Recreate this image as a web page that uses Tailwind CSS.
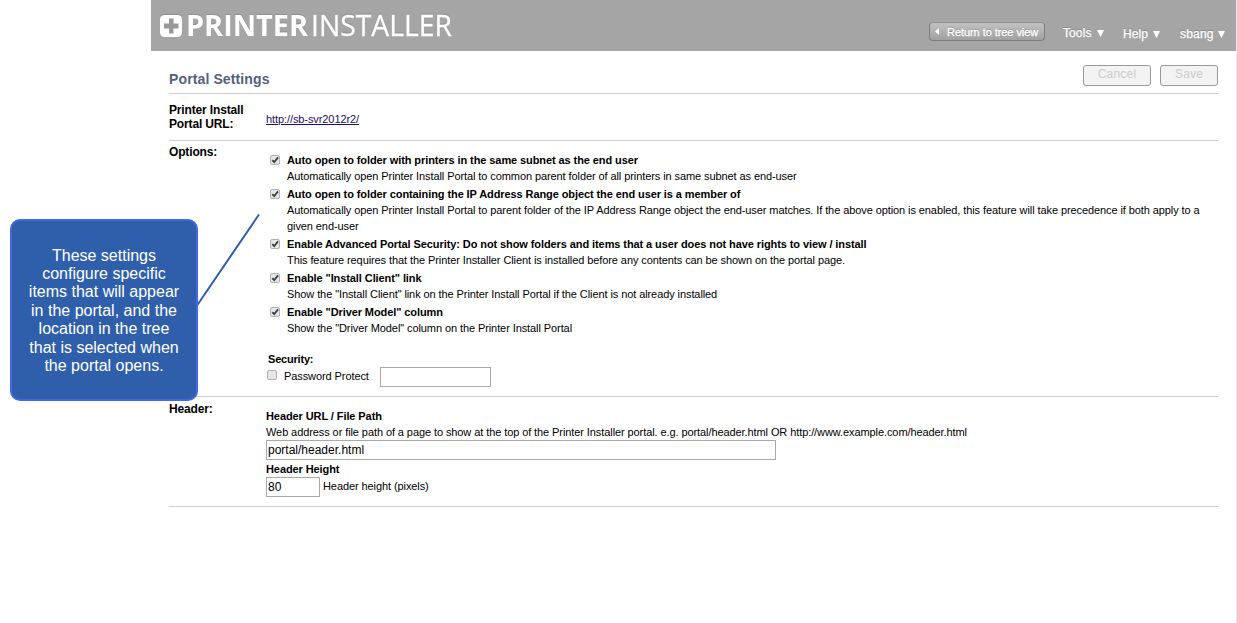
<!DOCTYPE html>
<html lang="en">
<head>
<meta charset="utf-8">
<title>Portal Settings</title>
<script src="https://cdn.jsdelivr.net/npm/@tailwindcss/browser@4"></script>
</head>
<body class="relative h-[623px] w-[1237px] overflow-hidden bg-white font-['Liberation_Sans',Arial,sans-serif] text-[11px] leading-4 tracking-[-0.088px] text-black">
<svg class="hidden"><defs>
<linearGradient id="box" x1="0" y1="0" x2="0" y2="1"><stop offset="0" stop-color="#f0f0f0"/><stop offset="1" stop-color="#dadada"/></linearGradient>
</defs>
<symbol id="unchecked" viewBox="0 0 10 10"><rect x=".5" y=".5" width="9" height="9" rx="1.5" fill="#e6e6e6" stroke="#b2b2b2"/></symbol>
<symbol id="checked" viewBox="0 0 10 10"><rect x=".5" y=".5" width="9" height="9" rx="1.5" fill="#e6e6e6" stroke="#b2b2b2"/><path d="M2.300 5.200 4.200 7.200 8 2.400" fill="none" stroke="#3c3c3c" stroke-width="1.800"/></symbol>
</svg>
<div class="ml-[151px] h-full w-[1086px] border-r border-[#ececec]">
  <header class="flex h-[51px] items-start bg-[#a5a5a5] text-white">
    <svg class="ml-[9px] shrink-0 tracking-normal [filter:drop-shadow(0_-1px_0_#8f8f8f)]" width="300" height="51" viewBox="0 0 300 51">
      <rect x="0" y="15" width="22" height="22" rx="4.5" fill="#fff"/>
      <path d="M9 18.500h4.500v5h5v5h-5v5H9v-5H4v-5h5z" fill="#999"/>
      <text x="26" y="36" font-family="Open Sans, sans-serif" font-weight="700" font-size="29" textLength="122" lengthAdjust="spacingAndGlyphs" fill="#fff">PRINTER</text>
      <text x="151" y="36" font-family="Open Sans, sans-serif" font-weight="400" font-size="29" textLength="141" lengthAdjust="spacingAndGlyphs" fill="#fff" stroke="#fff" stroke-width=".3">INSTALLER</text>
    </svg>
    <nav class="ml-auto flex items-start text-[12px] tracking-normal [text-shadow:0_-1px_0_#858585]">
      <div class="mt-[22px] mr-[18px] flex h-[19px] w-[116px] items-center rounded-[4px] border border-[#7d7d7d] border-t-[#929292] bg-linear-to-b from-[#c2c2c2] to-[#a0a0a0] pl-[5px] text-[11px]">
        <svg class="mr-[7px] shrink-0" width="5" height="7" viewBox="0 0 5 7"><path d="M4 0v7L0 3.500z" fill="#fff"/></svg>
        <span class="tracking-[-0.06px] whitespace-nowrap [-webkit-text-stroke:0.3px_white]">Return to tree view</span>
      </div>
      <div class="mt-[25px] flex w-[60px] items-center"><span class="w-[34px] tracking-[0.1px] [-webkit-text-stroke:0.25px_white]">Tools</span><svg width="7" height="7"><path d="M0 0h7L3.500 7z" fill="#fff"/></svg></div>
      <div class="mt-[26px] flex w-[57px] items-center"><span class="w-[30px] tracking-[0.1px] [-webkit-text-stroke:0.25px_white]">Help</span><svg width="7" height="7"><path d="M0 0h7L3.500 7z" fill="#fff"/></svg></div>
      <div class="mt-[26px] flex w-[56px] items-center"><span class="w-[38px] tracking-[0.2px] [-webkit-text-stroke:0.25px_white]">sbang</span><svg width="7" height="7"><path d="M0 0h7L3.500 7z" fill="#fff"/></svg></div>
    </nav>
  </header>
  <main class="mx-[18px] w-[1049px]">
    <div class="flex h-[43px] items-start border-b border-[#ccc]">
      <h1 class="mt-5 text-[14px] leading-4 font-bold tracking-[0.12px] text-[#54617e]">Portal Settings</h1>
      <div class="mt-[14px] ml-auto flex gap-[9px] text-[12px] tracking-[0.2px] text-[#ccc]">
        <div class="h-[21px] w-[68px] rounded-[3px] border border-[#999] bg-[#f3f3f3] text-center">Cancel</div>
        <div class="h-[21px] w-[58px] rounded-[3px] border border-[#999] bg-[#f3f3f3] text-center">Save</div>
      </div>
    </div>
    <section class="flex h-[47px] border-b border-[#ccc]">
      <h2 class="w-[97px] pt-[9px] text-[12px] leading-[14px] font-bold tracking-[-0.15px]">Printer Install<br>Portal URL:</h2>
      <a class="mt-[17px] text-[11px] text-[#1a0d6b] underline">http://sb-svr2012r2/</a>
    </section>
    <section class="flex h-[256px] border-b border-[#ccc]">
      <h2 class="w-[97px] shrink-0 pt-[3px] text-[12px] font-bold tracking-[-0.15px]">Options:</h2>
      <div class="pt-[11px]">
        <div class="flex flex-col gap-[2px] pl-1">
          <div class="flex"><svg class="mt-[3px] mr-[7px] shrink-0" width="10" height="10"><use href="#checked"/></svg><div><b>Auto open to folder with printers in the same subnet as the end user</b><p>Automatically open Printer Install Portal to common parent folder of all printers in same subnet as end-user</p></div></div>
          <div class="flex"><svg class="mt-[3px] mr-[7px] shrink-0" width="10" height="10"><use href="#checked"/></svg><div><b>Auto open to folder containing the IP Address Range object the end user is a member of</b><p class="whitespace-nowrap">Automatically open Printer Install Portal to parent folder of the IP Address Range object the end-user matches. If the above option is enabled, this feature will take precedence if both apply to a<br>given end-user</p></div></div>
          <div class="flex"><svg class="mt-[3px] mr-[7px] shrink-0" width="10" height="10"><use href="#checked"/></svg><div><b>Enable Advanced Portal Security: Do not show folders and items that a user does not have rights to view / install</b><p>This feature requires that the Printer Installer Client is installed before any contents can be shown on the portal page.</p></div></div>
          <div class="flex"><svg class="mt-[3px] mr-[7px] shrink-0" width="10" height="10"><use href="#checked"/></svg><div><b>Enable "Install Client" link</b><p>Show the "Install Client" link on the Printer Install Portal if the Client is not already installed</p></div></div>
          <div class="flex"><svg class="mt-[3px] mr-[7px] shrink-0" width="10" height="10"><use href="#checked"/></svg><div><b>Enable "Driver Model" column</b><p>Show the "Driver Model" column on the Printer Install Portal</p></div></div>
        </div>
        <div class="mt-[15px] pl-[2px] font-bold tracking-[-0.2px]">Security:</div>
        <div class="flex pl-[1px]">
          <svg class="mt-[3px] mr-[7px]" width="10" height="10"><use href="#unchecked"/></svg>
          <span class="mt-[1px] w-[96px]">Password Protect</span>
          <div class="h-5 w-[111px] border border-[#a9a9a9]"></div>
        </div>
      </div>
    </section>
    <section class="flex h-[110px] border-b border-[#ccc]">
      <h2 class="w-[97px] shrink-0 pt-[4px] text-[12px] font-bold tracking-[-0.15px]">Header:</h2>
      <div class="pt-[11px]">
        <b class="block">Header URL / File Path</b>
        <p>Web address or file path of a page to show at the top of the Printer Installer portal. e.g. portal/header.html OR http://www.example.com/header.html</p>
        <div class="h-5 w-[510px] border border-[#a9a9a9] pt-[1px] pl-[1px] text-[12px] tracking-normal">portal/header.html</div>
        <b class="mt-[1px] block">Header Height</b>
        <div class="flex"><div class="h-5 w-[54px] border border-[#a9a9a9] pt-[1px] pl-[1px] text-[12px] tracking-normal">80</div><span class="mt-[1px] ml-[3px]">Header height (pixels)</span></div>
      </div>
    </section>
  </main>
</div>
<svg class="absolute top-[210px] left-[194px]" width="70" height="98"><path d="M3 95.500 65 4.500" stroke="#2f5fab" stroke-width="2"/></svg>
<aside class="absolute top-[219px] left-[10px] flex h-[182px] w-[188px] items-center justify-center rounded-[10px] border-2 border-[#4169e1] bg-[#2f5fab] pt-[2px] text-center text-[16px] leading-[18.4px] tracking-normal whitespace-nowrap text-white"><p>These settings<br>configure specific<br>items that will appear<br>in the portal, and the<br>location in the tree<br>that is selected when<br>the portal opens.</p></aside>
</body>
</html>
